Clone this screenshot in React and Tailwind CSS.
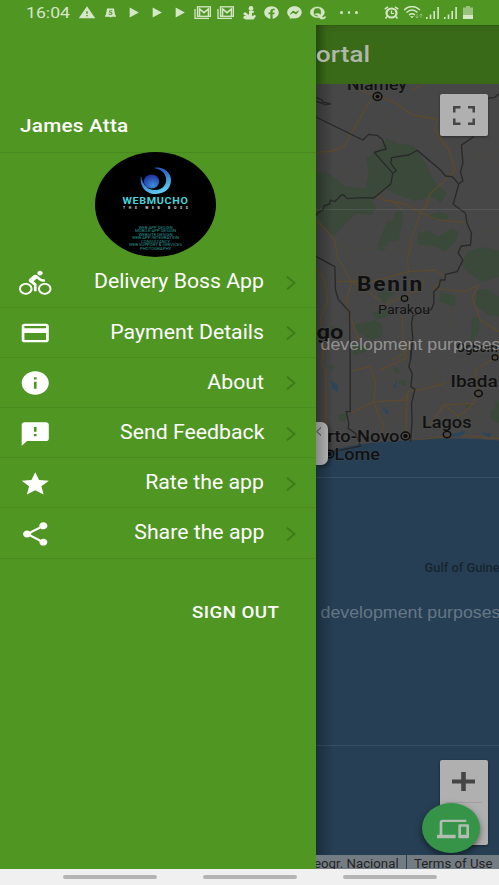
import React from 'react';
import {
  MdDirectionsBike, MdCreditCard, MdInfo, MdFeedback, MdStar, MdShare,
  MdDevices, MdWarning, MdPlayArrow,
} from 'react-icons/md';
import { FaFacebook, FaFacebookMessenger, FaQuora } from 'react-icons/fa';

const none = { preserveAspectRatio: 'none' };

function Gmail() {
  return (
    <svg viewBox="0 0 17 13" className="h-[13px] w-[17px]" fill="none" stroke="currentColor">
      <path d="M1 3v9.3h14" strokeWidth="1.3" />
      <rect x="3.5" y="0.8" width="13" height="9.5" strokeWidth="1.3" />
      <path d="M5.500 10V3L10 6.700 14.500 3v7" strokeWidth="1.600" />
    </svg>
  );
}

function Alarm() {
  return (
    <svg viewBox="0 0 15 13" className="ml-[26px] h-[13px] w-[15px] shrink-0" fill="none" stroke="currentColor">
      <ellipse cx="7.500" cy="7" rx="5" ry="4.500" strokeWidth="2.200" />
      <path d="M.7 3.200 4 .8M14.300 3.200 11 .8M3 10.500 1.500 12.500M12 10.500l1.500 2" strokeWidth="1.500" />
      <path d="M7.500 4.500v3h2.500" strokeWidth="1.200" />
    </svg>
  );
}

function Signal() {
  return (
    <svg viewBox="0 0 14 12" className="h-3 w-3.5" fill="currentColor">
      <path d="M0 10h1.6v2H0zM3.7 7.5h1.6V12H3.7zM7.4 4h1.6v8H7.4zM11.3 0h1.6v12h-1.6z" />
    </svg>
  );
}

function StatusBar() {
  return (
    <header className="flex h-[25px] shrink-0 items-center bg-[#509623] text-[#d5e7c8]">
      <div className="ml-[26px] w-[52px] shrink-0 whitespace-nowrap pt-[2px] text-[15.500px] leading-none">
        <span className="inline-block origin-left scale-x-[1.14]">16:04</span>
      </div>
      <MdWarning {...none} className="h-[15px] w-[18px] shrink-0" />
      <svg viewBox="0 0 12 10" className="ml-[9px] h-2.5 w-[11px] shrink-0" fill="currentColor">
        <path d="M2 0h8v1.5l1 5.5 1 1v1H7.5L6 10 4.5 9H0V8l1-1 1-5.5z" />
        <path d="M8 2.5H5v2h2.5v2H4" fill="none" stroke="#509623" strokeWidth="1" />
      </svg>
      <MdPlayArrow {...none} className="ml-[7px] h-[17px] w-5 shrink-0" />
      <MdPlayArrow {...none} className="ml-[3px] h-[17px] w-5 shrink-0" />
      <MdPlayArrow {...none} className="ml-[3px] h-[17px] w-5 shrink-0" />
      <div className="ml-[5px] flex shrink-0 gap-[6px]"><Gmail /><Gmail /></div>
      <svg viewBox="0 0 13 14" className="ml-[9px] h-3.5 w-[13px] shrink-0" fill="currentColor">
        <circle cx="8" cy="2.5" r="2.4" />
        <path d="M6 5h5v1.5L9 7v3l3-1 1 1-2.5 3.5H3L0 12l1-2h2L0 8l2-2 4 3z" />
      </svg>
      <FaFacebook {...none} className="ml-[8px] h-[13px] w-[15px] shrink-0" />
      <FaFacebookMessenger {...none} className="ml-[8px] h-[13px] w-[15px] shrink-0" />
      <FaQuora {...none} className="ml-[8px] h-[14px] w-[16px] shrink-0 stroke-current stroke-[14]" />
      <div className="ml-[14px] flex shrink-0 gap-[5px]">
        <i className="size-[2.500px] rounded-full bg-current" />
        <i className="size-[2.500px] rounded-full bg-current" />
        <i className="size-[2.500px] rounded-full bg-current" />
      </div>
      <Alarm />
      <svg viewBox="0 0 19 13" className="ml-[5px] h-[13px] w-[19px] shrink-0" fill="none" stroke="currentColor" strokeWidth="1.5">
        <path d="M0 4Q8-3 16 4M2.5 6.5Q8 1.500 13.500 6.500M5 9Q8 6.500 11 9" />
        <path d="M6.500 10.500h3L8 12z" fill="currentColor" strokeWidth=".5" />
        <path d="M13 8v4M11.500 10.500 13 12l1.500-1.500M17 12V8M15.500 9.500 17 8l1.500 1.500" strokeWidth=".8" opacity=".55" />
      </svg>
      <div className="ml-[3px] flex shrink-0 gap-1"><Signal /><Signal /></div>
      <svg viewBox="0 0 10 13" className="ml-[5px] h-[13px] w-2.5 shrink-0" fill="currentColor">
        <path d="M3 0h4v1.500h3V9H0V1.500h3z" opacity=".55" />
        <path d="M0 9h10v4H0z" />
      </svg>
    </header>
  );
}

const items = [
  { label: 'Delivery Boss App', Icon: MdDirectionsBike },
  { label: 'Payment Details', Icon: MdCreditCard },
  { label: 'About', Icon: MdInfo },
  { label: 'Send Feedback', Icon: MdFeedback },
  { label: 'Rate the app', Icon: MdStar },
  { label: 'Share the app', Icon: MdShare },
];

function Avatar() {
  const lines = ['WEB APP DESIGN', 'MOBILE APP DESIGN', 'WEBSITE DESIGN', 'WEB APP INTEGRATION', 'CONSULTANCY', 'WEB SUPPORT & SERVICES', 'PHOTOGRAPHY'];
  const widths = [34, 41, 34, 47, 29, 53, 31];
  return (
    <svg viewBox="0 0 121 105" className="ml-[95px] block h-[105px] w-[121px] shrink-0">
      <defs>
        <linearGradient id="swirl" x1="0" y1="0" x2=".4" y2="1">
          <stop offset="0" stopColor="#2140b5" />
          <stop offset=".5" stopColor="#3079cf" />
          <stop offset="1" stopColor="#5fc8ee" />
        </linearGradient>
        <radialGradient id="ball" cx=".6" cy=".8" r=".8">
          <stop offset="0" stopColor="#3d8edb" />
          <stop offset="1" stopColor="#1e2f9e" />
        </radialGradient>
      </defs>
      <ellipse cx="60.500" cy="52.500" rx="60.500" ry="52.500" fill="#000" />
      <path d="M59 16C67 14 76 20 76 28C76 37 69 42 60 42C51 42 44 34 46 24C48 34 53 38 60 38C68 38 72 32 71 26C70 20 65 17 59 16Z" fill="url(#swirl)" />
      <ellipse cx="56.500" cy="29.500" rx="7.700" ry="7" fill="url(#ball)" />
      <text x="27.500" y="51.500" textLength="66" lengthAdjust="spacingAndGlyphs" fontSize="9.500" fontWeight="700" letterSpacing=".6" fill="#45d4dc">WEBMUCHO</text>
      <text x="28" y="56.700" textLength="65" fontSize="3.500" fontWeight="700" fill="#ddd">THE WEB BOSS</text>
      {lines.map((t, i) => (
        <text key={t} x={60.500 - widths[i] / 2} y={76.700 + i * 3.500} textLength={widths[i]} lengthAdjust="spacingAndGlyphs" fontSize="3" fill="#2a9694">{t}</text>
      ))}
    </svg>
  );
}

function Drawer() {
  return (
    <aside className="flex w-[315.500px] shrink-0 flex-col bg-[#509623] text-white">
      <div className="flex h-[128px] shrink-0 items-end border-b border-[#488a1f] pb-[13px] pl-[19.500px]">
        <span className="origin-left scale-x-[1.12] whitespace-nowrap text-[18.500px] font-medium leading-[26px] tracking-[.2px]">James Atta</span>
      </div>
      <div className="-mt-px flex h-[105px] shrink-0"><Avatar /></div>
      <nav className="pt-[.4px]">
        {items.map(({ label, Icon }) => (
          <div key={label} className="flex h-[50.2px] items-center border-b border-[#4a8c20]">
            <Icon {...none} className="ml-[19px] mt-[2px] h-7 w-[32.500px] shrink-0" />
            <div className="flex flex-1 justify-end pt-px">
              <span className="origin-right scale-x-[1.09] whitespace-nowrap text-[19.500px] leading-6">{label}</span>
            </div>
            <svg viewBox="0 0 10 14" className="ml-[22px] mr-[19.500px] mt-[2px] h-3.5 w-2.5" fill="none" stroke="#407b1b" strokeWidth="2">
              <path d="M1 .7 8.500 7 1 13.300" />
            </svg>
          </div>
        ))}
      </nav>
      <div className="mt-[41.500px] flex justify-end pr-[36px]">
        <span className="origin-right scale-x-[1.1] text-[17px] font-medium leading-6 tracking-[.4px]">SIGN OUT</span>
      </div>
    </aside>
  );
}

function Label({ x, y, w, size, children, weight = 500, fill = '#111', halo = '#505050', spacing }) {
  return (
    <text x={x} y={y} textLength={w} lengthAdjust="spacingAndGlyphs" letterSpacing={spacing} fontSize={size} fontWeight={weight} fill={fill}
      stroke={halo} strokeWidth="1.500" strokeOpacity=".6" paintOrder="stroke">{children}</text>
  );
}

function MapView() {
  return (
    <svg viewBox="315.500 84 183.500 771" className="block h-[771px] w-[183.500px]">
      <defs>
        <linearGradient id="edge"><stop offset="0" stopColor="#000" stopOpacity=".28" /><stop offset="1" stopColor="#000" stopOpacity="0" /></linearGradient>
      </defs>
      <rect x="315" y="84" width="184" height="771" fill="#474747" />

      {/* parks and forests */}
      <g fill="#3b493b">
        <g transform="translate(305 20) scale(.33333)">
          <path d="M31 453 72 462 120 500 180 505 190 460 182 415 235 375 242 355 275 370 320 375 345 400 380 470 400 500 425 520 405 548 385 530 330 542 262 520 240 500 200 545 215 560 200 585 150 582 85 648 50 610 31 580z" />
        </g>
        <g transform="translate(305 200) scale(.33333)">
          <path d="M270 35 290 30 290 70 280 120 250 125 235 153 214 145 230 100 245 65 262 62zM335 100 370 93 400 110 440 85 458 95 450 125 420 155 390 140 335 132zM370 45 400 35 430 45 425 60 380 58zM485 155 530 142 582 150 582 230 530 245 490 220 468 195zM407 277 450 288 448 318 400 305zM515 270 545 267 582 290 582 350 550 345 510 315zM215 280 250 270 265 280 235 310zM145 375 210 360 230 375 230 410 200 420 160 400zM500 350 522 355 520 395 495 430zM75 380 100 380 92 398 75 394zM200 340 235 325 260 345 215 360zM140 430 190 440 180 455 145 465z" />
        </g>
        <g transform="translate(305 340) scale(.33333)">
          <path d="M68 75 90 78 80 95zM265 80 282 88 280 102 262 95zM280 120 305 120 300 138 282 132zM98 225 125 220 120 245 102 243zM475 195 490 188 505 200 485 203zM582 178 570 190 570 205 555 210 558 238 582 250z" />
        </g>
      </g>

      {/* minor roads */}
      <g fill="none" stroke="#4d483f" strokeWidth="2.500">
        <g transform="translate(305 20) scale(.33333)">
          <path d="M33 425Q65 410 75 380Q115 420 120 460L185 480M242 240Q230 280 255 335M280 330 270 365M515 405Q560 410 582 430M320 290Q350 330 395 345M460 485 510 400 582 395" />
        </g>
        <g transform="translate(305 200) scale(.33333)">
          <path d="M90 158 120 130 160 155 230 140 310 160M400 155 480 145 510 100 582 85M428 320 430 370 480 400 500 455M110 150 170 240 210 225M33 230 60 255" />
        </g>
        <g transform="translate(305 340) scale(.33333)">
          <path d="M140 145 200 110 280 120M330 80 390 130 480 120M350 20Q390 70 400 200L530 250M140 215 230 260 300 210M480 100 582 140" />
        </g>
      </g>

      {/* highways */}
      <g fill="none" stroke="#5b4a2d" strokeWidth="4" strokeLinejoin="round">
        <g transform="translate(305 20) scale(.33333)">
          <path d="M33 398 80 393 115 380 195 240 215 229 265 245 320 285 395 297 388 330 430 390 450 450 430 470 375 520 355 570M210 524 235 540 270 548 290 570M320 210 350 195M215 229 150 205" />
        </g>
        <g transform="translate(305 200) scale(.33333)">
          <path d="M33 60 88 120 95 170 135 240 225 302M95 245 205 243 310 215 390 210 420 232 385 265 480 275 520 255 500 290 525 360 582 395M140 245 125 290 125 325 162 425M310 215 305 185 320 110 345 40 370 0M235 0 300 12 345 38 400 60 480 68M355 235 350 265 235 315M290 345 295 460 260 480M33 205 55 235 68 300 45 355 55 480" />
        </g>
        <g transform="translate(305 340) scale(.33333)">
          <path d="M60 0 48 70 60 90 60 300 45 340M140 92 195 80 210 130 205 185 220 225 235 260 220 295M220 92 300 55 305 0M205 185 140 218M205 185 300 180 308 155 340 150 420 130M308 155 300 220 305 305 450 285 582 295M515 160 505 190 415 195 370 260M515 160 510 90 582 45M415 195 460 230 505 190" />
        </g>
      </g>

      {/* lakes */}
      <g fill="#29465d">
        <g transform="translate(305 340) scale(.33333)">
          <path d="M75 120 98 135 98 155 82 148zM275 118 270 145 264 142zM230 200 250 215 245 225zM440 282 480 272 475 285 440 292zM525 278 555 280 555 293z" />
        </g>
      </g>
      <path d="M380 101 391 108" stroke="#31506d" />

      {/* sea */}
      <path d="M315 452.500C330 451 343 447 362 444C390 440 410 441 430 439C455 438 478 439 499 440.500V855H315Z" fill="#263f54" />

      {/* national borders */}
      <g fill="none" stroke="#292929" strokeWidth="4" strokeLinejoin="round">
        <g transform="translate(305 20) scale(.33333)">
          <path d="M31 291 172 360 190 343 215 346 230 358 242 387 206 397 262 460 256 492 228 515 205 534 170 533 125 536 115 525 107 525 88 545 75 540 72 552 55 558 53 570 35 580 33 586M262 460 272 452 256 430 258 413 310 405 335 391 405 450 420 468 440 470 460 492 472 482 465 455 472 430 468 375 505 350M460 492 443 553 480 580M33 232 50 240 50 245 75 252 60 254 33 244M545 235 568 232 582 220" />
        </g>
        <g transform="translate(305 200) scale(.33333)">
          <path d="M480 40 484 68 498 100 495 135 467 138 458 158 472 180 455 215 420 223 418 240 405 240 400 260 385 275 385 310 378 328 323 345 318 370 322 420 315 480M31 169 88 200 90 270 98 298 132 335 134 480" />
        </g>
        <g transform="translate(305 340) scale(.33333)">
          <path d="M134 60V215H122L130 250 128 265 150 280 165 318 80 336M315 60 310 80 320 100 316 140 328 148 318 190 320 240 315 305M315 60 318 0" />
        </g>
      </g>

      {/* tile seams */}
      <g stroke="#fff" strokeOpacity=".09">
        <path d="M315 209.500h184M315 477.500h184M315 745.500h184" />
      </g>

      <Label x="346.500" y="89.500" w="60" size="17">Niamey</Label>
      <Label x="356.500" y="291" w="67" size="19.500" weight="700" spacing="1.500">Benin</Label>
      <Label x="377.500" y="313.500" w="52" size="13.500" weight="400">Parakou</Label>
      <Label x="316" y="339" w="27" size="20" weight="700">go</Label>
      <Label x="456" y="352" w="62" size="13">Ogbomoso</Label>
      <Label x="450" y="387" w="58" size="17">Ibadan</Label>
      <Label x="421.500" y="428" w="49.500" size="17">Lagos</Label>
      <Label x="327" y="442" w="72" size="17">rto-Novo</Label>
      <Label x="334" y="459.500" w="45.500" size="17" halo="#3d4a54">Lome</Label>
      <Label x="424" y="572" w="82" size="12" fill="#172430" halo="#263f54">Gulf of Guinea</Label>
      <g fontFamily="Liberation Sans, Arial, sans-serif" fontSize="16.500" fill="#fff">
        <text x="320" y="349.500" textLength="180" lengthAdjust="spacingAndGlyphs" fillOpacity=".42">development purposes</text>
        <text x="320" y="617.500" textLength="180" lengthAdjust="spacingAndGlyphs" fillOpacity=".3">development purposes</text>
      </g>

      <g fill="none" stroke="#0c0c0c" strokeWidth="1.500">
        <ellipse cx="377" cy="96.500" rx="4.400" ry="3.900" /><ellipse cx="377" cy="96.500" rx="1.300" ry="1.100" fill="#0c0c0c" />
        <ellipse cx="404" cy="298.500" rx="3.200" ry="2.800" strokeWidth="1.200" />
        <ellipse cx="494.500" cy="357.500" rx="3" ry="2.700" strokeWidth="1.200" />
        <ellipse cx="478" cy="393.500" rx="3.800" ry="3.200" />
        <ellipse cx="446.500" cy="434.500" rx="3.800" ry="3.200" />
        <ellipse cx="405" cy="436" rx="4.400" ry="3.900" /><ellipse cx="405" cy="436" rx="1.500" ry="1.300" fill="#0c0c0c" />
        <ellipse cx="329" cy="454" rx="4.200" ry="3.700" /><ellipse cx="329" cy="454" rx="1.400" ry="1.200" fill="#0c0c0c" />
      </g>
      <rect x="315" y="84" width="18" height="771" fill="url(#edge)" />
    </svg>
  );
}

function Portal() {
  return (
    <main className="flex w-[183.500px] shrink-0 flex-col overflow-hidden">
      <div className="flex h-[59px] shrink-0 items-center overflow-hidden bg-[#396a18] text-[#b0b8aa] shadow-[inset_10px_3px_8px_-5px_rgba(0,0,0,0.35)]">
        <span className="origin-left scale-x-[1.15] text-[22.500px] font-medium leading-none tracking-[.1px]">ortal</span>
      </div>
      <div className="relative h-[771px] shrink-0 overflow-hidden">
        <MapView />
        <button className="absolute left-[124px] top-[10px] flex h-[42px] w-[48px] items-center justify-center rounded-[2px] bg-[#b0b0b0] shadow-[0_1px_3px_rgba(0,0,0,0.4)]">
          <svg viewBox="0 0 22 19" className="h-[19px] w-[22px]" fill="none" stroke="#454545" strokeWidth="2.500">
            <path d="M1.250 6.500V1.250H7.500M15 1.250h5.750V6.500M20.750 12.500v5.250H15M7.500 17.750H1.250V12.500" />
          </svg>
        </button>
        <button className="absolute left-0 top-[338px] h-[43px] w-3 rounded-r-[7px] bg-gradient-to-r from-[#898989] to-[#adadad] shadow-[2px_2px_4px_rgba(0,0,0,0.4)]">
          <svg viewBox="0 0 6 9" className="absolute left-0 top-[5px] h-[9px] w-1.5" fill="none" stroke="#333"><path d="M5 .5.8 4.500 5 8.500" /></svg>
        </button>
        <div className="absolute left-[124px] top-[676px] flex h-[85px] w-[48px] flex-col items-center rounded-[2px] bg-[#b0b0b0] shadow-[0_1px_3px_rgba(0,0,0,0.4)]">
          <svg viewBox="0 0 23 19" className="mt-[12px] h-[19px] w-[23px]" fill="#454545"><path d="M9.200 0h4.600v7.500H23v4h-9.200V19H9.200v-7.500H0v-4h9.200z" /></svg>
          <div className="mt-[11px] h-px w-9 bg-[#a0a0a0]" />
        </div>
        <button className="absolute left-[106.500px] top-[719px] flex h-[50px] w-[58px] items-center justify-center rounded-[50%] bg-[#359447] text-[#b0bdb0] shadow-[0_3px_6px_rgba(0,0,0,0.5)]">
          <MdDevices {...none} className="ml-[3px] mt-[2px] h-7 w-[32px]" />
        </button>
      </div>
      <footer className="flex h-[14px] shrink-0 items-center overflow-hidden whitespace-nowrap bg-[#747c83] text-[12.500px] text-[#242424]">
        <div className="h-[14px] w-[91.500px] shrink-0 overflow-hidden border-r border-[#263f54] leading-[17px]"><span className="-ml-[2px] inline-block origin-left scale-x-[1.06]">eogr. Nacional</span></div>
        <span className="ml-[7px] h-[14px] origin-left scale-x-[1.06] leading-[17px]">Terms of Use</span>
      </footer>
    </main>
  );
}

export default function App() {
  return (
    <div className="flex h-[885px] w-[499px] flex-col overflow-hidden bg-[#509623] font-[Roboto,sans-serif]">
      <StatusBar />
      <div className="flex h-[844px] shrink-0"><Drawer /><Portal /></div>
      <div className="flex h-4 shrink-0 items-center gap-[46px] bg-[#f0f0f0] pl-[63px]">
        <div className="h-[4px] w-[94px] shrink-0 rounded-full bg-[#b4b4b4]" />
        <div className="h-[4px] w-[94px] shrink-0 rounded-full bg-[#b4b4b4]" />
        <div className="h-[4px] w-[94px] shrink-0 rounded-full bg-[#b4b4b4]" />
      </div>
    </div>
  );
}
